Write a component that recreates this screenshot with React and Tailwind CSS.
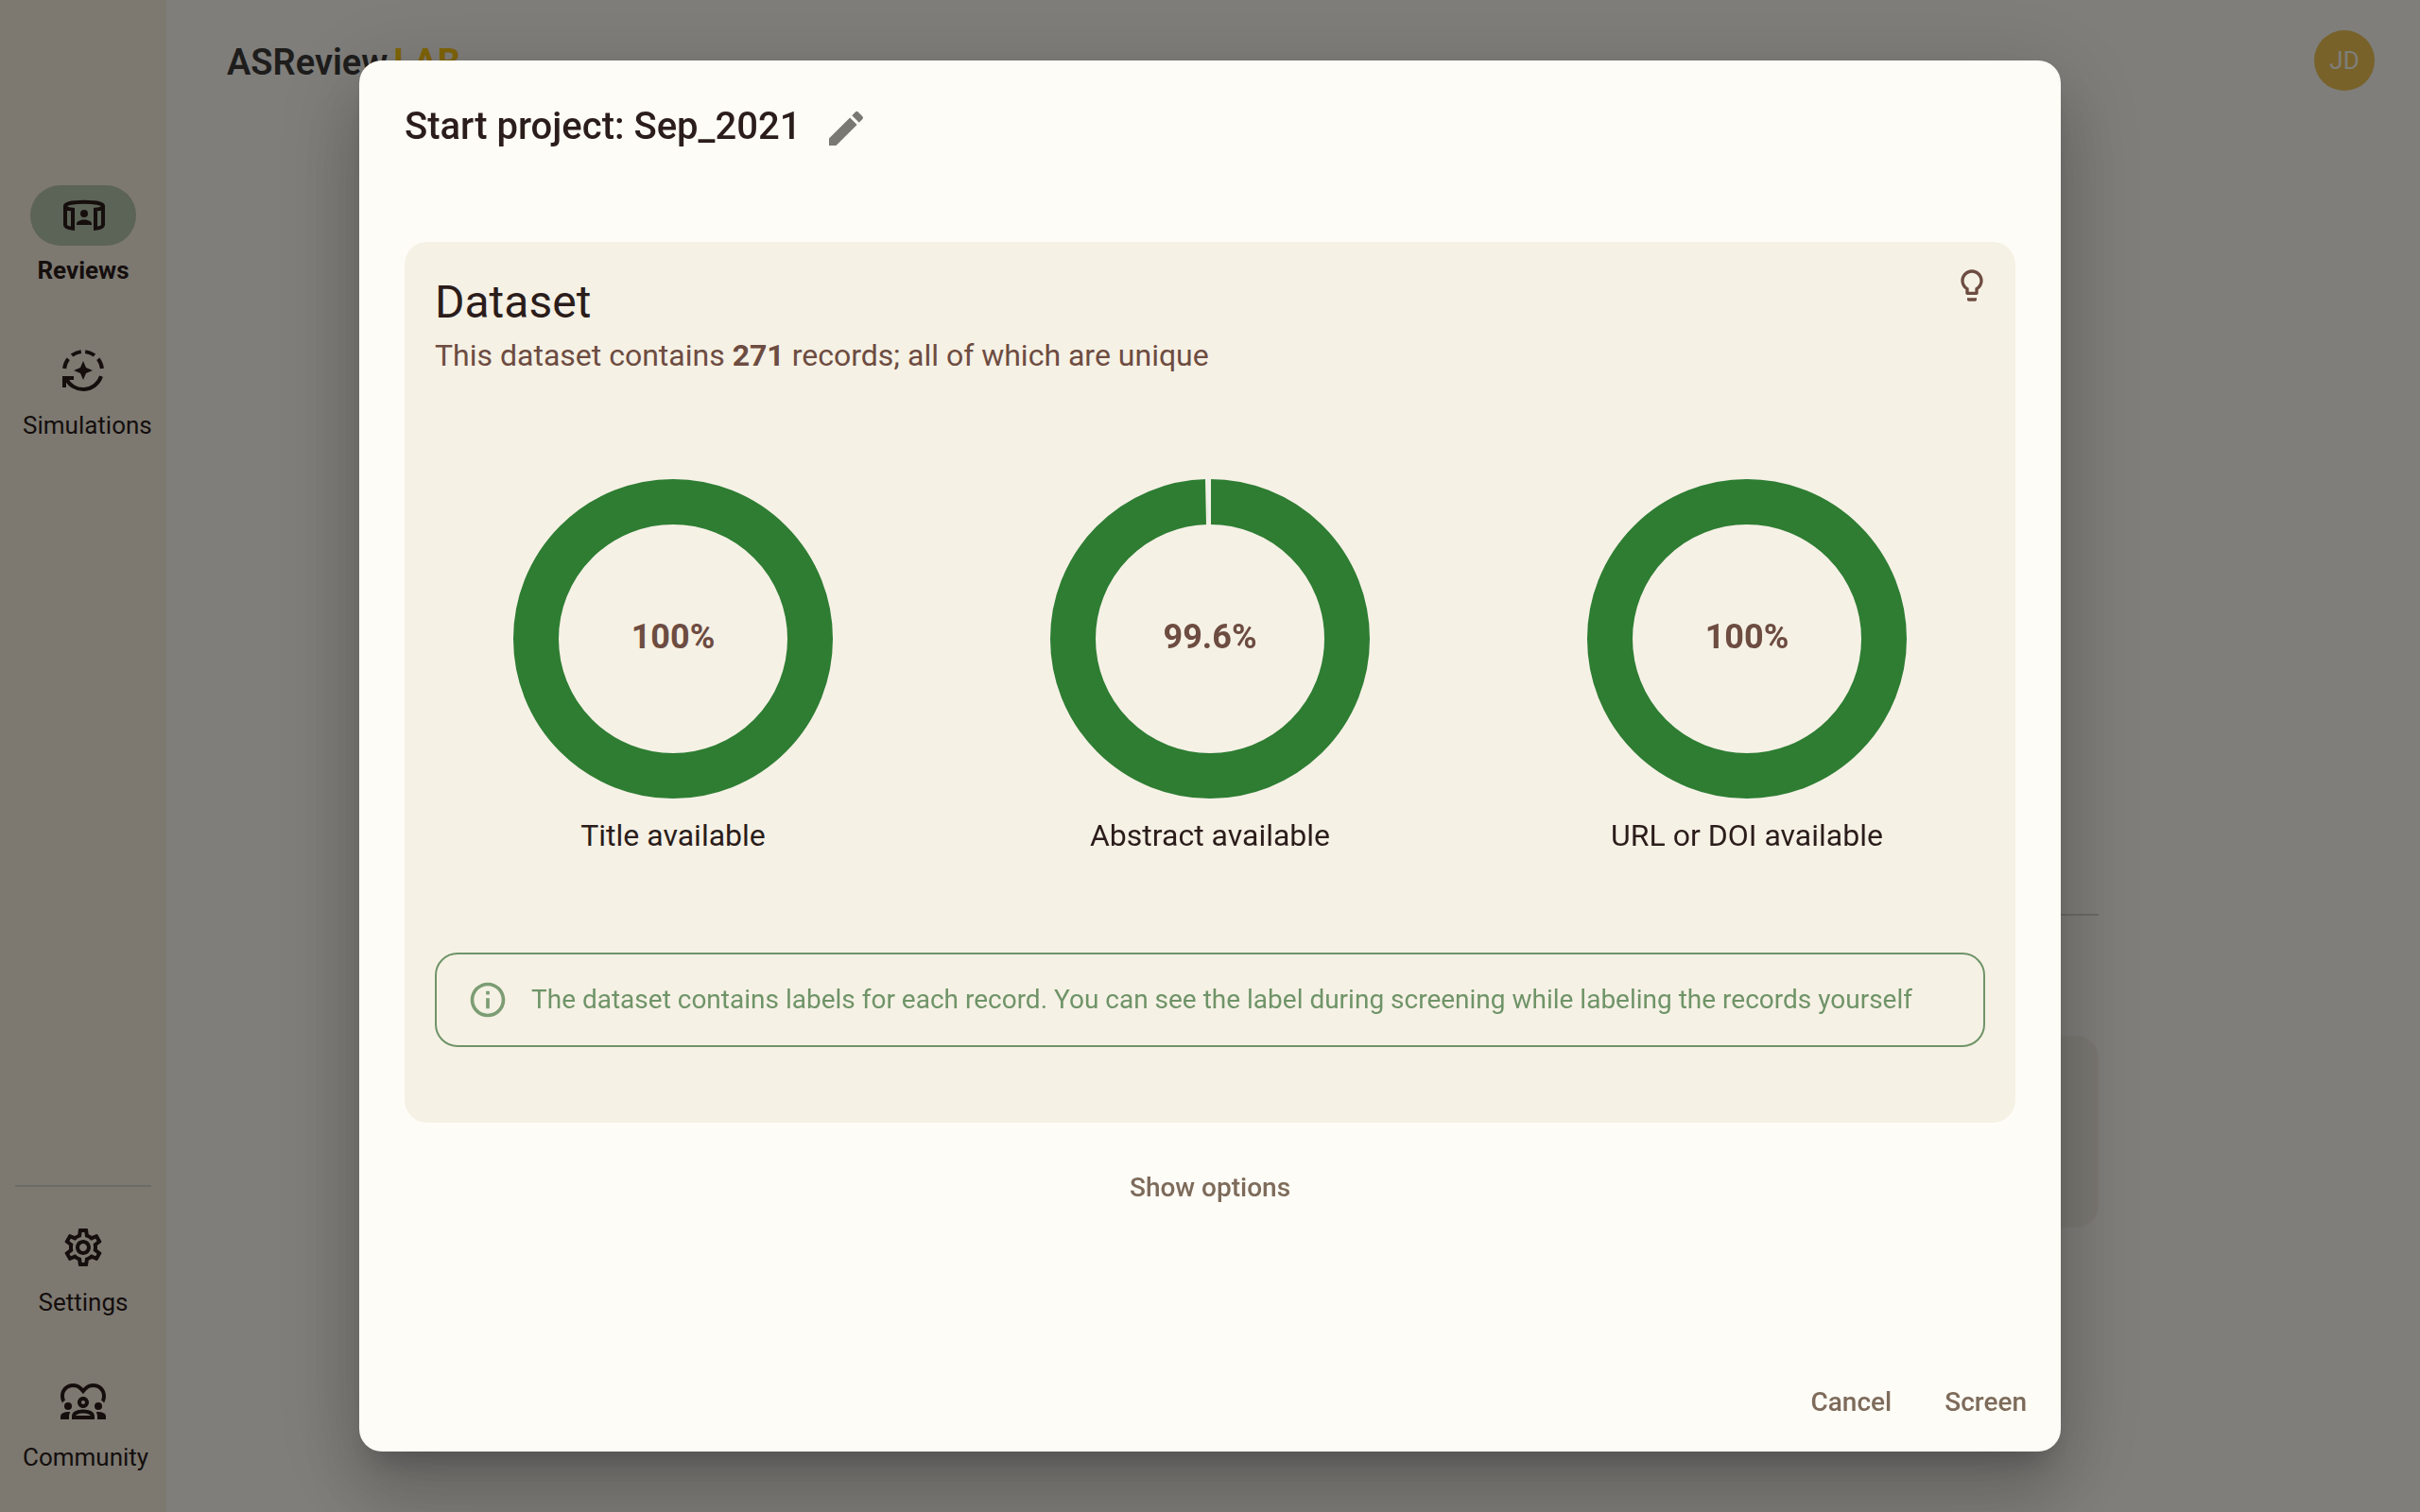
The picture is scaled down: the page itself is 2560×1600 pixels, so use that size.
import React from "react";
import {
  MdEdit,
  MdLightbulbOutline,
  MdInfoOutline,
  MdOutlineSettings,
  MdOutlineDiversity1,
} from "react-icons/md";

function ReviewsIcon() {
  return (
    <svg viewBox="0 0 24 24" className="size-12" fill="none" aria-hidden="true">
      <path
        d="M2.5 7C2.5 4.200 22.500 4.200 22.500 7M2.500 7V17C2.500 18 4.200 18.600 6.500 18.900V8.900C4.200 8.600 2.500 8 2.500 7ZM22.500 7V17C22.500 18 20.800 18.600 18.500 18.900V8.900C20.800 8.600 22.500 8 22.500 7Z"
        stroke="currentColor"
        strokeWidth="2"
      />
      <circle cx="12.500" cy="11" r="2" fill="currentColor" />
      <path d="M8.500 17v-.5c0-1.400 2.200-2.200 4-2.200s4 .8 4 2.200v.5z" fill="currentColor" />
    </svg>
  );
}

function SimulationsIcon() {
  return (
    <svg viewBox="0 0 24 24" className="size-12" fill="none" aria-hidden="true">
      <g stroke="currentColor" strokeWidth="2">
        <path d="M2.050 11A10 10 0 0 1 4.120 5.840" />
        <path d="M6 4A10 10 0 0 1 10.900 2.060" />
        <path d="M13.100 2.060A10 10 0 0 1 18 4" />
        <path d="M19.880 5.840A10 10 0 0 1 21.950 11" />
        <path d="M2.900 16.150A10 10 0 0 0 21.500 15.100" />
      </g>
      <path d="M1 15h6v2H4.300L3 18.300V21H1z" fill="currentColor" />
      <path
        d="M12 7l1.500 3.500L17 12l-3.500 1.500L12 17l-1.500-3.500L7 12l3.500-1.500z"
        fill="currentColor"
      />
    </svg>
  );
}

function NavItem({ icon, label, active }) {
  return (
    <a href="#" className="flex flex-col items-center gap-2 text-[#2b1d1b]">
      <span
        className={
          active
            ? "flex h-16 w-28 items-center justify-center rounded-full bg-[#b8c6ae]"
            : "flex h-16 w-28 items-center justify-center rounded-full"
        }
      >
        {icon}
      </span>
      <span
        className={
          active
            ? "w-32 text-center text-[26px] leading-9 font-bold whitespace-nowrap"
            : "w-32 text-center text-[26px] leading-9 whitespace-nowrap"
        }
      >
        {label}
      </span>
    </a>
  );
}

function Sidebar() {
  return (
    <nav className="flex w-44 shrink-0 flex-col justify-between bg-[#faf2e2] pt-[196px] pb-10">
      <div className="flex flex-col gap-14">
        <NavItem active icon={<ReviewsIcon />} label="Reviews" />
        <NavItem icon={<SimulationsIcon />} label="Simulations" />
      </div>
      <div>
        <hr className="mx-4 mb-8 border-t-2 border-[#d8d6ce]" />
        <div className="flex flex-col gap-14">
          <NavItem icon={<MdOutlineSettings className="size-12" />} label="Settings" />
          <NavItem icon={<MdOutlineDiversity1 className="size-12" />} label="Community" />
        </div>
      </div>
    </nav>
  );
}

function Donut({ value, percent, label }) {
  const radius = 145;
  const length = 2 * Math.PI * radius;
  return (
    <figure className="flex flex-col items-center">
      <div className="grid place-items-center">
        <svg viewBox="0 0 338 338" className="col-start-1 row-start-1 size-[338px]" fill="none" aria-hidden="true">
          <circle cx="169" cy="169" r={radius} stroke="#eeeeee" strokeWidth="48" />
          <circle
            cx="169"
            cy="169"
            r={radius}
            stroke="#2e7d32"
            strokeWidth="48"
            strokeDasharray={`${length * value} ${length}`}
            transform="rotate(-90 169 169)"
          />
          {value < 1 && (
            <g stroke="#f6f1e5" strokeWidth="2">
              <path d="M169 0V48" />
              <path d="M165 0L166 48" />
            </g>
          )}
        </svg>
        <span className="col-start-1 row-start-1 pb-1 text-4xl font-bold text-[#6d4c41]">{percent}</span>
      </div>
      <figcaption className="mt-[15px] text-[32px] leading-12 text-[#2b1d1b]">{label}</figcaption>
    </figure>
  );
}

function DatasetCard() {
  return (
    <section className="rounded-3xl bg-[#f6f1e5] pb-20">
      <div className="flex items-start justify-between px-8 pt-8">
        <div>
          <h2 className="text-5xl leading-16 text-[#2b1d1b]">Dataset</h2>
          <p className="text-[32px] leading-12 text-[#6d4c41]">
            This dataset contains <strong className="font-bold">271</strong> records; all of which are unique
          </p>
        </div>
        <button type="button" aria-label="Tips" className="-mt-2 -mr-2 p-0.5 text-[#6d4c41]">
          <MdLightbulbOutline className="size-10" />
        </button>
      </div>
      <div className="mt-[107px] grid grid-cols-3">
        <Donut value={1} percent="100%" label="Title available" />
        <Donut value={0.9963} percent="99.6%" label="Abstract available" />
        <Donut value={1} percent="100%" label="URL or DOI available" />
      </div>
      <div
        className="mx-8 mt-[100px] flex min-h-[100px] items-center gap-6 rounded-3xl border-2 border-[#6f9468] px-8 text-[28px] leading-10 text-[#6f9468]"
        role="status"
      >
        <MdInfoOutline className="size-11 shrink-0 opacity-90" />
        <p>
          The dataset contains labels for each record. You can see the label during screening while labeling the
          records yourself
        </p>
      </div>
    </section>
  );
}

function StartDialog() {
  return (
    <div className="fixed inset-0 flex justify-center bg-black/50 p-16">
      <div
        role="dialog"
        aria-modal="true"
        aria-labelledby="dialog-title"
        className="flex w-full max-w-[1800px] flex-col rounded-3xl bg-[#fefcf6] shadow-[0_22px_30px_-14px_rgba(0,0,0,0.2),0_48px_76px_6px_rgba(0,0,0,0.14),0_18px_92px_16px_rgba(0,0,0,0.12)]"
      >
        <header className="flex items-center gap-4 px-12 pt-10">
          <h1 id="dialog-title" className="pb-1 text-[40px] leading-15 font-medium text-[#2b1d1b]">
            Start project: Sep_2021
          </h1>
          <button type="button" aria-label="Edit project name" className="p-2 text-[#797873]">
            <MdEdit className="size-12" />
          </button>
        </header>
        <div className="flex grow flex-col px-12 pt-[88px]">
          <DatasetCard />
          <button type="button" className="mx-auto mt-[33px] px-4 py-4 text-[28px] leading-10 font-medium text-[#7d6b5b]">
            Show options
          </button>
        </div>
        <footer className="flex justify-end gap-4 p-4 text-[28px] leading-12 font-medium text-[#7d6b5b]">
          <button type="button" className="px-5 py-3">Cancel</button>
          <button type="button" className="px-5 py-3">Screen</button>
        </footer>
      </div>
    </div>
  );
}

export default function App() {
  return (
    <div className="flex h-screen overflow-hidden bg-[#fefcf6] font-['Roboto',sans-serif]">
      <Sidebar />
      <div className="flex grow flex-col">
        <header className="flex h-32 items-center justify-between pr-12 pl-16">
          <div className="flex gap-1.5 pt-1 text-[38px] font-semibold text-[#3c3a38]">
            <span>ASReview</span>
            <span className="font-bold text-[#ffc80f]">LAB</span>
          </div>
          <button type="button" className="size-16 rounded-full bg-[#f0c454] text-[26px] text-[#fefcf6]">JD</button>
        </header>
        <main className="mx-auto flex w-full max-w-[1704px] grow flex-col pt-[839px]">
          <hr className="border-t-2 border-[#d8d6ce]" />
          <div className="mt-[127px] h-[203px] rounded-3xl bg-[#f6f1e5]" />
        </main>
      </div>
      <StartDialog />
    </div>
  );
}
